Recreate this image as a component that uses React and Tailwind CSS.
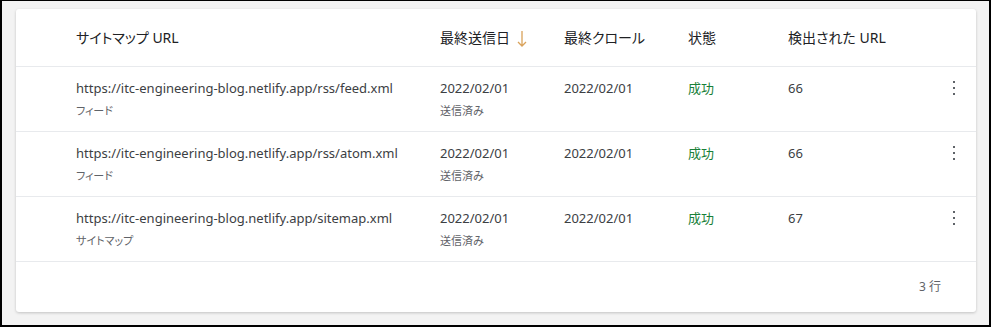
import React from "react";

const rows = [
  { url: "https://itc-engineering-blog.netlify.app/rss/feed.xml", type: "フィード", sent: "2022/02/01", crawl: "2022/02/01", status: "成功", found: "66" },
  { url: "https://itc-engineering-blog.netlify.app/rss/atom.xml", type: "フィード", sent: "2022/02/01", crawl: "2022/02/01", status: "成功", found: "66" },
  { url: "https://itc-engineering-blog.netlify.app/sitemap.xml", type: "サイトマップ", sent: "2022/02/01", crawl: "2022/02/01", status: "成功", found: "67" },
];

const cols = "grid grid-cols-[60px_364px_124px_124px_100px_1fr_44px]";

function Kebab() {
  return (
    <div className="flex flex-col items-center gap-[4px] pt-[14px]">
      <span className="w-[2px] h-[2px] bg-[#5f6368]" />
      <span className="w-[2px] h-[2px] bg-[#5f6368]" />
      <span className="w-[2px] h-[2px] bg-[#5f6368]" />
    </div>
  );
}

export default function App() {
  return (
    <div
      className="w-[991px] h-[327px] bg-[#f3f3f3] border-t border-x-2 border-b-2 border-black pt-[8px] pl-[14px] [font-feature-settings:'palt']"
      style={{ fontFamily: '"Noto Sans", "Noto Sans CJK JP", sans-serif' }}
    >
      <div className="w-[960px] bg-white rounded-[3px] shadow-[0_1px_3px_rgba(0,0,0,0.2)] text-[#3c4043]">
        {/* header */}
        <div className={`${cols} h-[58px] items-center border-b border-[#e8eaed] text-[14px] text-[#202124]`}>
          <div />
          <div>サイトマップ URL</div>
          <div className="flex items-center gap-[6px]">
            最終送信日
            <svg width="12" height="18" viewBox="0 0 12 18" className="mt-[2px]">
              <path d="M6 1 V16 M2 12 L6 16 L10 12" fill="none" stroke="#d9a25a" strokeWidth="1.3" />
            </svg>
          </div>
          <div>最終クロール</div>
          <div>状態</div>
          <div>検出された URL</div>
          <div />
        </div>

        {rows.map((r, i) => (
          <div key={i} className={`${cols} h-[65px] border-b border-[#e8eaed] pt-[11px]`}>
            <div />
            <div>
              <div className="text-[13px] leading-[20px]">{r.url}</div>
              <div className="text-[11px] leading-[16px] mt-[5px] text-[#5f6368]">{r.type}</div>
            </div>
            <div>
              <div className="text-[13px] leading-[20px]">{r.sent}</div>
              <div className="text-[11px] leading-[16px] mt-[5px] text-[#5f6368]">送信済み</div>
            </div>
            <div className="text-[13px] leading-[20px]">{r.crawl}</div>
            <div className="text-[13px] leading-[20px] text-[#188038]">{r.status}</div>
            <div className="text-[13px] leading-[20px]">{r.found}</div>
            <div className="-mt-[11px]">
              <Kebab />
            </div>
          </div>
        ))}

        {/* footer */}
        <div className="h-[50px] flex items-center justify-end pr-[35px] text-[12px] text-[#5f6368]">
          3 行
        </div>
      </div>
    </div>
  );
}
